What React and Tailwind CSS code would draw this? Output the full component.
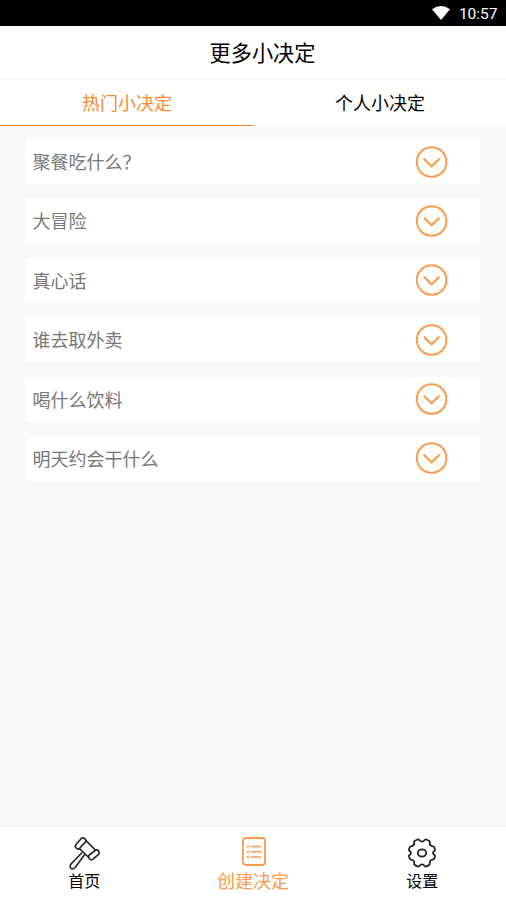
import { useState } from "react";

const hotDecisions = [
  "聚餐吃什么？",
  "大冒险",
  "真心话",
  "谁去取外卖",
  "喝什么饮料",
  "明天约会干什么",
];

function ChevronCircle() {
  return (
    <svg width="32" height="32" viewBox="0 0 32 32" fill="none" stroke="#fb9b4b">
      <circle cx="15.6" cy="16" r="14.8" strokeWidth="2" />
      <path d="M7.8 12.8 L15.6 20.2 L23.4 12.8" strokeWidth="2.2" />
    </svg>
  );
}

function GavelIcon() {
  return (
    <svg
      width="31"
      height="33"
      viewBox="0 0 93 99"
      fill="none"
      stroke="#222"
      strokeWidth="4.8"
      strokeLinejoin="round"
      strokeLinecap="round"
    >
      <path d="M20 24 L36 5 Q40 1 46 4 L49 7 Q52 11 49 15 L32 34 Q28 38 23 34 L20 31 Q17 28 20 24 Z" />
      <path d="M61 54 L79 40 Q84 37 88 41 L90 45 Q92 49 88 53 L71 67 Q66 70 62 66 L60 63 Q57 58 61 54 Z" />
      <path d="M51 11 L79 39 M31 35 L58 60" />
      <path d="M38 48 L6 81 Q1 89 6 94 Q13 98 19 91 L46 54" />
    </svg>
  );
}

function ListIcon() {
  return (
    <svg width="25" height="29" viewBox="0 0 25 29" fill="none" stroke="#fb9b4b">
      <rect x="2" y="1" width="22" height="27" rx="3" strokeWidth="1.8" />
      <path d="M9.5 9.5 H20 M9.5 14.8 H20 M9.5 20 H20" strokeWidth="1.6" />
      <path d="M5.8 9.5 H7.8 M5.8 14.8 H7.8 M5.8 20 H7.8" strokeWidth="2" />
    </svg>
  );
}

function GearIcon() {
  return (
    <svg
      width="28"
      height="30"
      viewBox="0 0 28 30"
      fill="none"
      stroke="#222"
      strokeWidth="1.8"
      strokeLinejoin="round"
    >
      <path d="M9.6 1.5 Q10.6 1 11.2 2 Q14 5.2 16.8 2 Q17.4 1 18.4 1.5 L21 2.7 Q22 3.2 21.8 4.3 Q21.4 8 25 8.4 Q26 8.5 26.4 9.5 L27 11.5 Q27.3 12.4 26.4 13 Q23.6 15 26.4 17 Q27.3 17.6 27 18.5 L26.2 20.7 Q25.8 21.6 24.8 21.7 Q21.4 22 21.8 25.4 Q22 26.6 21 27.1 L18.4 28.4 Q17.4 28.9 16.8 28 Q14 24.8 11.2 28 Q10.6 28.9 9.6 28.4 L7 27.1 Q6 26.6 6.2 25.4 Q6.6 22 3.2 21.7 Q2.2 21.6 1.8 20.7 L1 18.5 Q0.7 17.6 1.6 17 Q4.4 15 1.6 13 Q0.7 12.4 1 11.5 L1.6 9.5 Q2 8.5 3 8.4 Q6.6 8 6.2 4.3 Q6 3.2 7 2.7 Z" />
      <ellipse cx="14" cy="15" rx="4.2" ry="3.6" />
    </svg>
  );
}

export default function App() {
  const [tab, setTab] = useState("hot");

  return (
    <div className="flex h-[900px] w-[506px] flex-col overflow-hidden bg-[#fafafa] font-['Noto_Sans_CJK_SC',sans-serif]">
      {/* Status bar */}
      <div className="flex h-[26px] shrink-0 items-center justify-end bg-black pr-[8.5px] text-white">
        <svg width="18" height="14" viewBox="0 0 18 14" fill="white" className="mr-[9px]">
          <path d="M0 3.2 Q9 -3.2 18 3.2 L9 14 Z" />
        </svg>
        <span className="pt-[3px] font-[Roboto,sans-serif] text-[15.5px] leading-none">10:57</span>
      </div>

      {/* Title */}
      <header className="flex h-[54px] shrink-0 items-center justify-center border-b border-[#f6f6f6] bg-white pb-[2px] pl-[19px] text-black">
        <h1 className="text-[21.2px] leading-none">更多小决定</h1>
      </header>

      {/* Tabs */}
      <div className="flex h-[46px] shrink-0 bg-white text-[18px] leading-none">
        <button
          onClick={() => setTab("hot")}
          className={`flex-1 border-b pb-[2px] pl-px ${tab === "hot" ? "border-[#f78b2d] text-[#f78b2d]" : "border-white text-black"}`}
        >
          热门小决定
        </button>
        <button
          onClick={() => setTab("mine")}
          className={`flex-1 border-b pb-[2px] pl-px ${tab === "mine" ? "border-[#f78b2d] text-[#f78b2d]" : "border-white text-black"}`}
        >
          个人小决定
        </button>
      </div>

      {/* Decision list */}
      <main className="flex-1 px-[26px] pt-[13px]">
        {tab === "hot" && (
          <ul className="flex flex-col gap-[14.4px] bg-[#faf9fa]">
            {hotDecisions.map((name) => (
              <li
                key={name}
                className="flex h-[45px] items-center justify-between bg-white pr-[32px] pl-[6.5px] text-[18px] leading-none text-[#777]"
              >
                <span className="pb-px">{name}</span>
                <ChevronCircle />
              </li>
            ))}
          </ul>
        )}
      </main>

      {/* Bottom nav */}
      <nav className="flex h-[75px] shrink-0 border-t-2 border-[#f3f3f3] bg-white text-[16px] leading-none text-black">
        <button className="flex flex-1 flex-col items-center pt-[10px]">
          <GavelIcon />
          <span className="mt-[2px]">首页</span>
        </button>
        <button className="flex flex-1 flex-col items-center pt-[10px] text-[18px] text-[#fb9b4b]">
          <ListIcon />
          <span className="mt-[5px]">创建决定</span>
        </button>
        <button className="flex flex-1 flex-col items-center pt-[11px]">
          <GearIcon />
          <span className="mt-[4px] pl-px">设置</span>
        </button>
      </nav>
    </div>
  );
}
